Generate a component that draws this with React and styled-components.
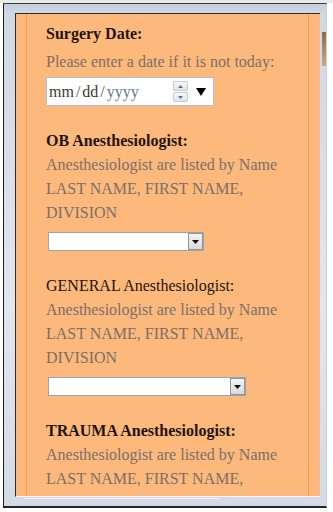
import styled, { createGlobalStyle } from "styled-components";

const GlobalStyle = createGlobalStyle`
  html, body {
    margin: 0;
    padding: 0;
    background: #ffffff;
  }

  body {
    font-family: "Liberation Serif", "Times New Roman", serif;
  }
`;

const Desktop = styled.div`
  width: 333px;
  height: 512px;
  box-sizing: border-box;
  padding: 3px 6px 4px 3px;
  background: linear-gradient(180deg, #e9e9e9 0, #e9e9e9 3px, #ffffff 3px);
`;

const Window = styled.div`
  box-sizing: border-box;
  width: 324px;
  height: 505px;
  padding: 9px 6px 9px 11px;
  border-left: 1px solid #1f1f1f;
  border-top: 1px solid #3c3c3c;
  border-right: 1px solid #c4ccd6;
  border-bottom: 2px solid #262626;
  background:
    linear-gradient(180deg, #8c6a4e, #c9a98c) no-repeat right 0 top 28px / 4px 34px,
    linear-gradient(90deg, transparent 20px, #eef2f6 20px, #eef2f6 215px, transparent 215px) no-repeat left 0 bottom 7px / 100% 1px,
    linear-gradient(180deg, #c3cfdc 0, #cfd9e4 10px, #dfe6ee 60%, #d2dce6 100%);
`;

const Panel = styled.div`
  box-sizing: border-box;
  width: 305px;
  height: 484px;
  padding: 0 11px 0 10px;
  border-top: 1px solid #2e2e2e;
  border-left: 1px solid #2e2e2e;
  border-bottom: 1px solid #f4f6f8;
  background: #fdb97c;
  overflow: hidden;
`;

const Column = styled.div`
  box-sizing: border-box;
  height: 100%;
  padding: 8px 0 0 19px;
  border-left: 1px solid #f39c52;
  border-right: 1px solid #f39c52;
`;

const Section = styled.section`
  display: flex;
  flex-direction: column;
  align-items: flex-start;
  margin-bottom: 23px;
`;

const Heading = styled.h2`
  margin: 0 0 ${(p) => p.$gap || 0}px;
  font-size: 16px;
  line-height: 24px;
  font-weight: ${(p) => (p.$bold ? 700 : 400)};
  color: #1f140c;
`;

const Hint = styled.p`
  margin: 0;
  font-size: 16px;
  line-height: 24px;
  color: #7b6f68;
`;

const DateField = styled.div`
  box-sizing: border-box;
  width: 168px;
  height: 29px;
  margin-top: 3px;
  padding: 0 7px 0 2px;
  display: flex;
  align-items: center;
  background: #ffffff;
  border: 1px solid #b9bcc2;
  font-size: 16px;
  color: #3e3a38;
`;

const Slash = styled.span`
  margin: 0 2px;
  color: #5a5652;
`;

const Year = styled.span`
  color: #66758f;
`;

const Spinner = styled.div`
  margin-left: auto;
  display: flex;
  flex-direction: column;
  gap: 1px;
`;

const SpinButton = styled.div`
  box-sizing: border-box;
  width: 15px;
  height: 10px;
  display: flex;
  align-items: center;
  justify-content: center;
  border: 1px solid #c6c9cf;
  border-radius: 2px;
  background: linear-gradient(180deg, #f8f8f8, #e2e3e6);
`;

const DropArrow = styled.svg`
  margin-left: 8px;
`;

const Select = styled.div`
  box-sizing: border-box;
  width: ${(p) => p.$width}px;
  height: 19px;
  margin: 7px 0 0 2px;
  display: flex;
  justify-content: flex-end;
  background: #ffffff;
  border: 1px solid #9aa3b0;
`;

const SelectButton = styled.div`
  box-sizing: border-box;
  width: 15px;
  height: 17px;
  display: flex;
  align-items: center;
  justify-content: center;
  border: 1px solid #8e949c;
  background: linear-gradient(180deg, #f4f4f4, #d9d9d9);
`;

const Tri = ({ up, color = "#4d6fb0", w = 5, h = 3 }) => (
  <svg width={w} height={h} viewBox={`0 0 ${w} ${h}`}>
    <polygon
      points={up ? `0,${h} ${w},${h} ${w / 2},0` : `0,0 ${w},0 ${w / 2},${h}`}
      fill={color}
    />
  </svg>
);

const hintLines = ["Anesthesiologist are listed by Name", "LAST NAME, FIRST NAME,", "DIVISION"];

// the last section runs past the bottom of the window, so it only shows what fits
const AnesthSection = ({ title, bold, width, visible = 3 }) => (
  <Section>
    <Heading $bold={bold}>{title} Anesthesiologist:</Heading>
    {hintLines.slice(0, visible).map((line) => (
      <Hint key={line}>{line}</Hint>
    ))}
    {visible === 3 && (
      <Select $width={width}>
        <SelectButton>
          <Tri color="#111" w={7} h={4} />
        </SelectButton>
      </Select>
    )}
  </Section>
);

const App = () => {
  return (
    <>
      <GlobalStyle />
      <Desktop>
        <Window>
          <Panel>
            <Column>
              <Section>
                <Heading $bold $gap={4}>
                  Surgery Date:
                </Heading>
                <Hint>Please enter a date if it is not today:</Hint>
                <DateField>
                  <span>mm</span>
                  <Slash>/</Slash>
                  <span>dd</span>
                  <Slash>/</Slash>
                  <Year>yyyy</Year>
                  <Spinner>
                    <SpinButton>
                      <Tri up />
                    </SpinButton>
                    <SpinButton>
                      <Tri />
                    </SpinButton>
                  </Spinner>
                  <DropArrow width="10" height="8" viewBox="0 0 10 8">
                    <polygon points="0,0 10,0 5,8" fill="#000" />
                  </DropArrow>
                </DateField>
              </Section>
              <AnesthSection title="OB" bold width={156} />
              <AnesthSection title="GENERAL" width={198} />
              <AnesthSection title="TRAUMA" bold width={198} visible={2} />
            </Column>
          </Panel>
        </Window>
      </Desktop>
    </>
  );
};

export default App;
